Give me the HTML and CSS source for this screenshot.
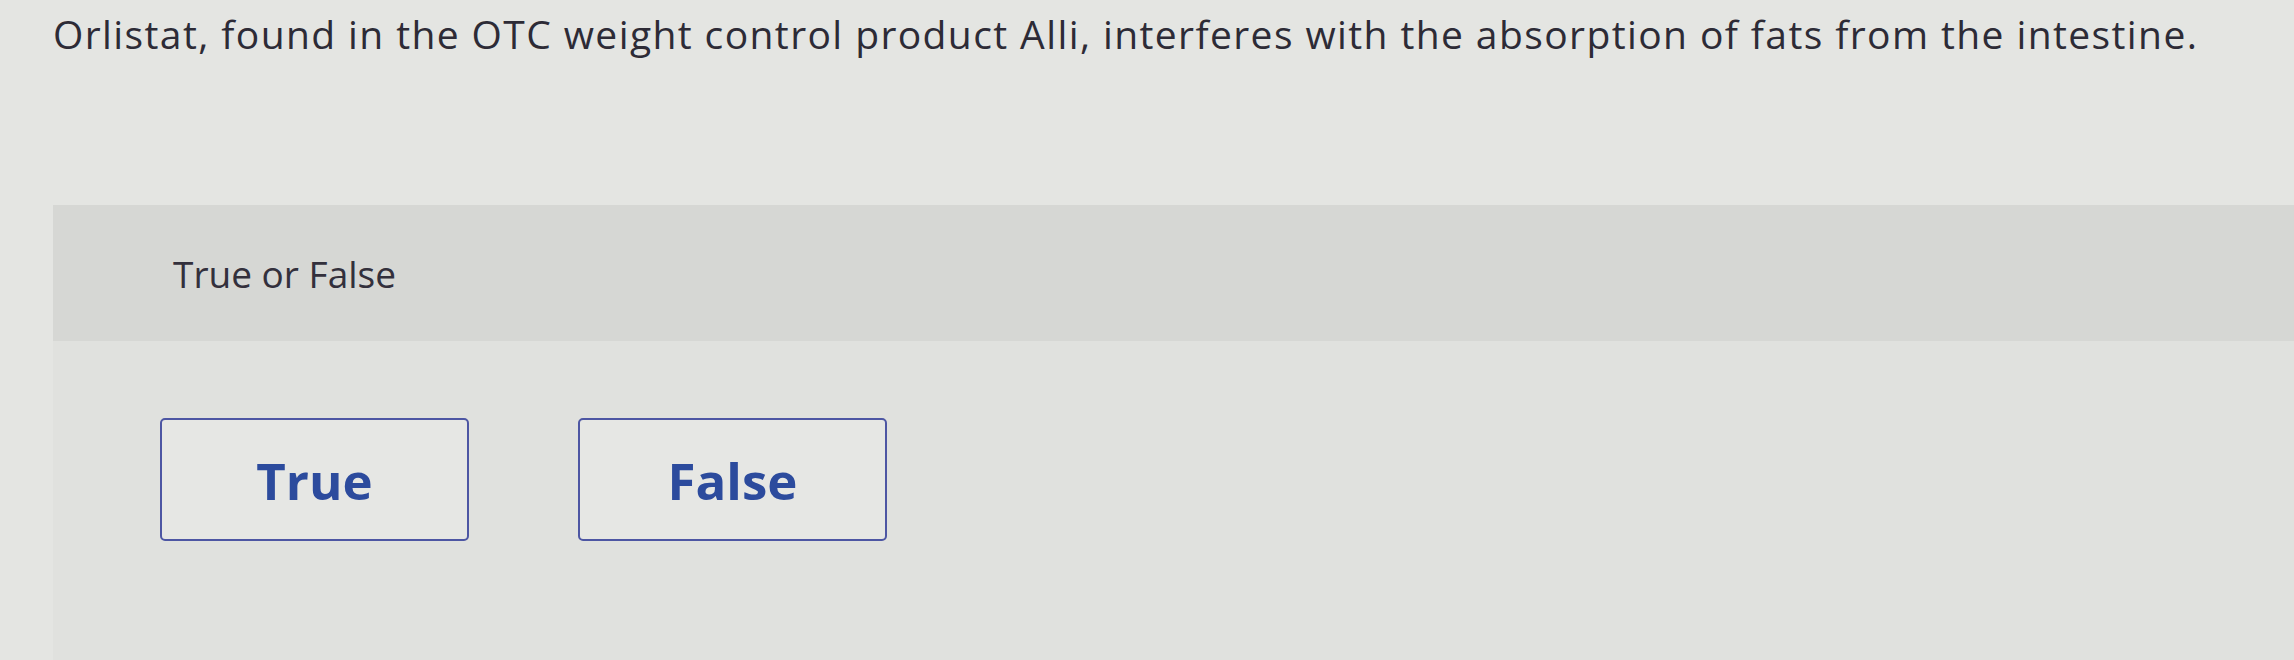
FILE: index.html
```html
<!DOCTYPE html>
<html lang="en">
<head>
  <meta charset="UTF-8">
  <title>True or False</title>
  <link rel="stylesheet" href="styles.css">
</head>
<body>
  <p class="prompt">Orlistat, found in the OTC weight control product Alli, interferes with the absorption of fats from the intestine.</p>

  <div class="answer-panel">
    <div class="answer-header">True or False</div>
    <div class="choices">
      <button class="choice">True</button>
      <button class="choice">False</button>
    </div>
  </div>
</body>
</html>
```

FILE: styles.css
```css
/* Question layout */
html, body {
  height: 100%;
}

body {
  margin: 0;
  background-color: #e4e5e2;
  font-family: "Open Sans", Lato, sans-serif;
  font-variant-ligatures: none;
  color: #2d2b36;
  display: flex;
  flex-direction: column;
  overflow: hidden;
}

.prompt {
  margin: 0;
  padding: 11px 0 0 53px;
  font-size: 39px;
  line-height: 46px;
  letter-spacing: 1.4px;
  white-space: nowrap;
}

.answer-panel {
  flex: 1;
  margin: 148px 0 0 53px;
  background-color: #e0e1de;
}

.answer-header {
  height: 136px;
  display: flex;
  align-items: center;
  padding-left: 120px;
  background-color: #d6d7d4;
  font-size: 37px;
  color: #33303c;
}

.choices {
  display: flex;
  gap: 109px;
  padding: 77px 0 0 107px;
}

.choice {
  width: 309px;
  height: 123px;
  border: 2px solid #4d56a3;
  border-radius: 5px;
  background-color: #e6e7e4;
  color: #2c4b9d;
  font-family: "Open Sans", Lato, sans-serif;
  font-size: 51px;
  font-weight: 700;
  cursor: pointer;
}
```
